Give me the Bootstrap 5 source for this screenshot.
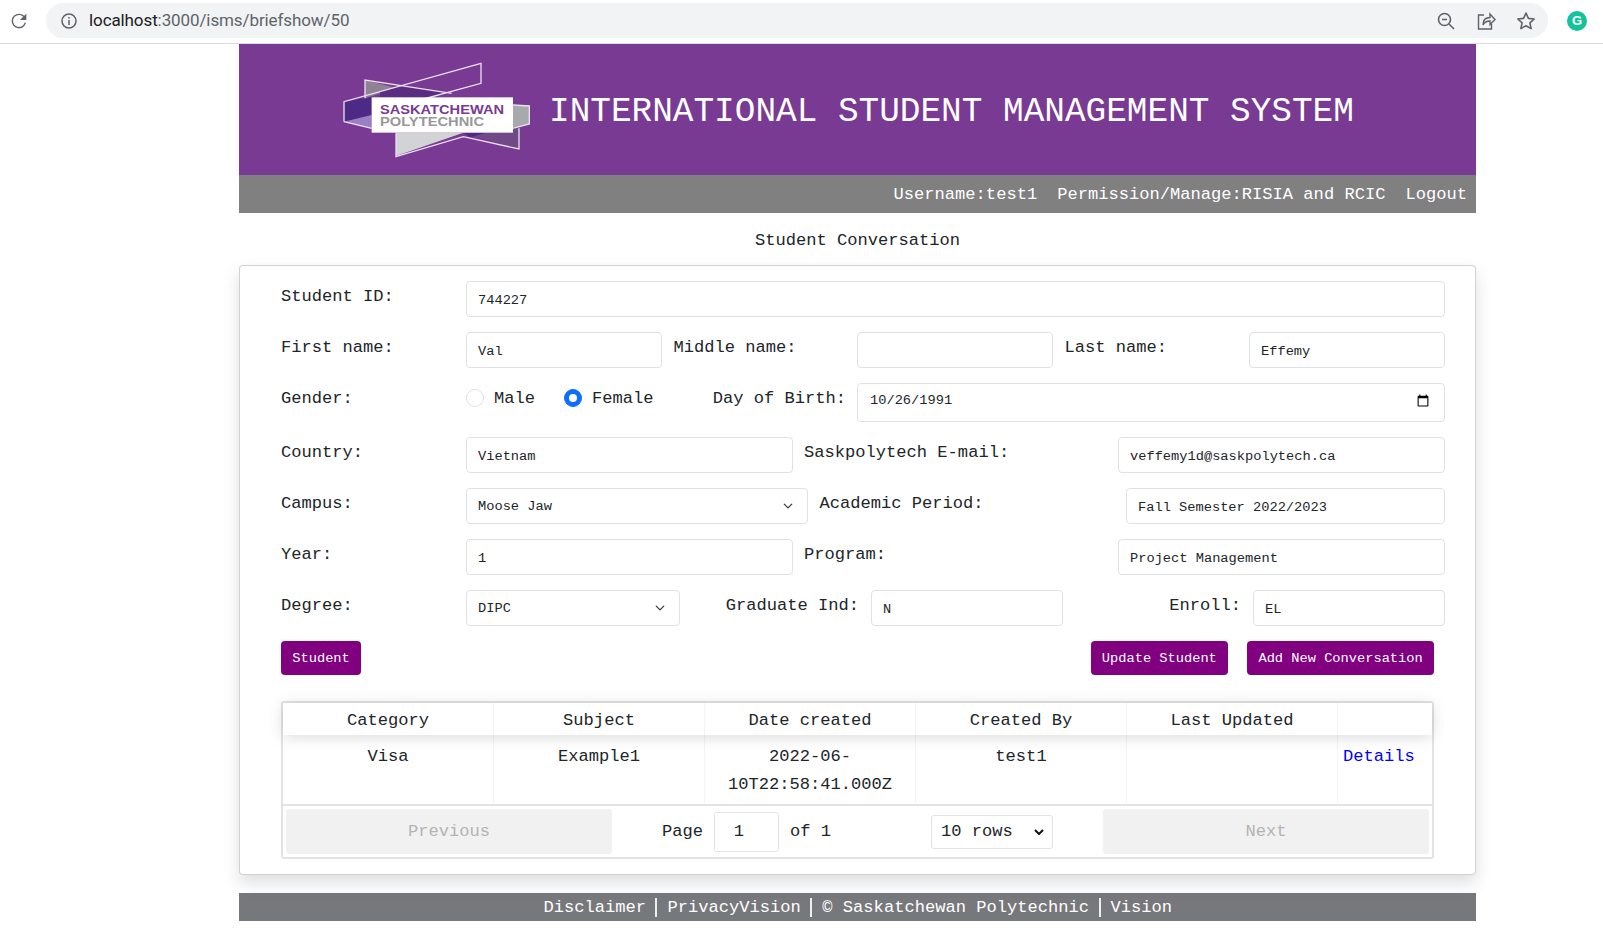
<!DOCTYPE html>
<html lang="en">
<head>
    <meta charset="UTF-8">
    <meta name="viewport" content="width=device-width, initial-scale=1.0">
    <title>ISMS</title>
    <link href="https://cdn.jsdelivr.net/npm/bootstrap@5.3.0/dist/css/bootstrap.min.css" rel="stylesheet">
    <style>
        body { font-family: "Liberation Mono", monospace; font-size: 17.1px; color: #212529; background: #fff; }

        /* browser bar */
        .chrome-bar { height: 44px; border-bottom: 1px solid #dadce0; padding: 3px 0 5px 0; }
        .chrome-reload { width: 46px; padding-right: 8px; }
        .omnibox { width: 1502px; height: 35px; background: #f1f3f4; border-radius: 18px; padding: 0 12px 0 14px; }
        .omni-url { font-family: Roboto, sans-serif; font-size: 17px; letter-spacing: -.1px; color: #5f6368; margin-left: 11px; }
        .omni-url b { font-weight: 400; color: #202124; }
        .omni-icons { gap: 20px; }
        .grammarly-dot { width: 20px; height: 20px; margin-left: 19px; background: #15c39a; color: #fff; border-radius: 50%; font: 700 13px "Liberation Sans", sans-serif; }

        .page-box { width: 1237px; margin-left: 239px; }
        .top-banner { height: 131px; background: #783a92; padding-left: 81px; color: #fff; }
        .banner-logo { display: block; width: 230px; height: 120px; }
        .banner-title { font-size: 34.4px; margin: 6px 0 0 -1px; line-height: 1; font-weight: 400; }
        .user-strip { height: 38px; background: #808080; color: #fff; padding: 2px 9px 0 0; gap: 20px; }
        .page-heading { height: 52px; line-height: 56px; text-align: center; }

        /* form card */
        .form-panel { padding: 15px 30px 15px 41px; border-radius: 4px; }
        .field-row { display: grid; margin-bottom: 15px; line-height: 28px; }
        .field-row label { padding-top: 2px; }
        .cols-wide { grid-template-columns: 185px 1fr; }
        .cols-three { grid-template-columns: 185px 196px 195px 196px 196px 196px; }
        .cols-half { grid-template-columns: 185px 326.5px 325.5px 327px; }
        .cols-campus { grid-template-columns: 185px 342px 318px 319px; }
        .cols-degree { grid-template-columns: 185px 214px 191px 192px 190px 192px; }
        .cols-gender { grid-template-columns: 185px 391px 588px; }
        .lbl-pad { padding-left: 11.5px; }
        .lbl-end { padding-right: 12px; text-align: right; }
        .form-panel .form-control, .form-panel .form-select {
            height: 36px; min-height: 0; font-size: 13.7px; padding: 2px 11px 0; border-radius: 4px; color: #212529; background-color: #fff;
        }
        .form-panel .form-select { padding-right: 30px; background-size: 12px 10px; background-position: right 13px center; }
        .form-panel input[type=date].form-control { height: 39px; padding: 0 12px 3px 12px; }
        .radio-group { height: 39px; padding-bottom: 9px; }
        .radio-group .form-check-input { width: 18px; height: 18px; margin: 0; }
        .radio-group label { margin: 0 0 0 10px; padding-top: 2px; }
        .radio-group .radio-two { margin-left: 29px; }
        .radio-group .dob-label { padding-right: 11px; margin-left: auto; }
        .purple-btn { background: #800080; border: 0; color: #fff; height: 34px; padding: 3px 11.3px 0; font-size: 13.7px; border-radius: 4px; }
        .btn-row { margin-bottom: 26px; padding-right: 11px; gap: 19px; }

        /* conversation table */
        .conv-grid { width: 1153px; border: 2px solid #e3e3e3; border-radius: 3px; }
        .conv-row > div { width: 211px; text-align: center; border-right: 1px solid #f4f4f4; padding: 0 5px; }
        .conv-row > div:last-child { width: 94px; border-right: 0; text-align: left; }
        .conv-head { height: 32px; line-height: 36px; box-shadow: 0 2px 15px rgba(0,0,0,.15); position: relative; background: #fff; }
        .conv-body { height: 71px; line-height: 28px; border-bottom: 2px solid #e3e3e3; }
        .conv-body > div { padding-top: 8px; }
        .conv-details { color: #00f; text-decoration: none; }
        .conv-pager { height: 51px; padding: 3px; }
        .pager-btn { width: 326px; height: 45px; background: #f1f1f1; color: #b4b4b4; border: 0; border-radius: 3px; }
        .pager-mid { width: 491px; gap: 100px; }
        .page-num { width: 65px; height: 40px; margin: 0 11px; border: 1px solid #e3e3e3; border-radius: 3px; text-align: center; padding: 0 15px 0 0; font: inherit; color: inherit; background: #fff; }
        .rows-pick {
            width: 122px; height: 34px; border: 1px solid #e3e3e3; border-radius: 3px; font: inherit; padding-left: 9px; color: #212529;
            appearance: none; background: #fff url("data:image/svg+xml,%3csvg xmlns='http://www.w3.org/2000/svg' viewBox='0 0 10 6'%3e%3cpath fill='none' stroke='%23111' stroke-width='2' d='M1 1l4 4 4-4'/%3e%3c/svg%3e") no-repeat right 8px center / 10px 6px;
        }

        .bottom-strip { height: 28px; margin-top: 18px; background: #77787b; color: #fff; line-height: 28px; padding-top: 1px; }
        .bottom-strip span { padding: 0 9.5px 0 10px; line-height: 19px; height: 19px; border-right: 2px solid #eee; }
        .bottom-strip span:last-child { border-right: 0; }
    </style>
</head>
<body>

<!-- browser bar -->
<div class="chrome-bar d-flex align-items-center">
    <div class="chrome-reload d-flex justify-content-center">
        <svg width="22" height="22" viewBox="0 0 24 24" fill="#5f6368"><path d="M17.65 6.35A7.95 7.95 0 0 0 12 4a8 8 0 1 0 7.73 10h-1.6A6.5 6.5 0 1 1 12 5.5c1.8 0 3.4.74 4.6 1.9L13 11h7V4z"/></svg>
    </div>
    <div class="omnibox d-flex align-items-center">
        <svg width="18" height="18" viewBox="0 0 18 18" fill="none" stroke="#5f6368" stroke-width="1.5"><circle cx="9" cy="9" r="7"/><path d="M9 8v5M9 5v1.6"/></svg>
        <div class="omni-url flex-grow-1"><b>localhost</b>:3000/isms/briefshow/50</div>
        <div class="omni-icons d-flex align-items-center">
            <svg width="20" height="20" viewBox="0 0 20 20" fill="none" stroke="#5f6368" stroke-width="1.6"><circle cx="8.5" cy="8.5" r="6"/><path d="M13 13l5 5M6 8.5h5"/></svg>
            <svg width="20" height="20" viewBox="0 0 20 20" fill="none" stroke="#5f6368" stroke-width="1.4"><path d="M8 4H2.5v14h13v-5"/><path d="M7 14c0-5 3-7.500 7-7.500V3l5 5.500-5 5V10c-3 0-5.500 1-7 4z"/></svg>
            <svg width="20" height="20" viewBox="0 0 20 20" fill="none" stroke="#5f6368" stroke-width="1.6" stroke-linejoin="round"><path d="M10 2l2.400 5.400 5.800.6-4.300 3.900 1.200 5.700-5.100-2.900-5.100 2.900 1.200-5.700L1.800 8l5.800-.6z"/></svg>
        </div>
    </div>
    <div class="grammarly-dot d-flex align-items-center justify-content-center">G</div>
</div>

<div class="page-box">
    <!-- banner -->
    <div class="top-banner d-flex align-items-center">
        <svg class="banner-logo" viewBox="0 0 690 360" role="img" aria-label="Saskatchewan Polytechnic logo">
            <polygon points="72,155 155,140 155,195 72,215" fill="#4c2a85"/>
            <polygon points="72,215 155,195 155,235" fill="#9a7fc2"/>
            <polygon points="135,90 232,115 155,138 135,145" fill="#8f8295"/>
            <polygon points="180,142 180,125 255,105 395,130 330,142" fill="#5b2d82"/>
            <polygon points="578,165 628,168 628,222 578,235" fill="#a7a9ac"/>
            <polygon points="228,248 430,248 228,318" fill="#d1d3d4"/>
            <polygon points="430,248 578,248 578,236 597,232 597,297" fill="#6f4a86"/>
            <polygon points="430,248 500,248 450,262" fill="#4c2a85"/>
            <polyline points="135,145 135,90 395,130" fill="none" stroke="#e8e0ee" stroke-width="4"/>
            <polyline points="72,215 72,155 483,40 483,100 300,150" fill="none" stroke="#e8e0ee" stroke-width="4"/>
            <polyline points="72,215 155,235" fill="none" stroke="#e8e0ee" stroke-width="4"/>
            <polyline points="228,250 228,320 430,260 597,297 597,235" fill="none" stroke="#e8e0ee" stroke-width="4"/>
            <polyline points="578,165 628,168 628,222 578,235" fill="none" stroke="#e8e0ee" stroke-width="4"/>
            <rect x="155" y="142" width="424" height="106" fill="#fff"/>
            <text x="180" y="192" font-family="Liberation Sans, sans-serif" font-weight="700" font-size="36" fill="#783a92" textLength="372" lengthAdjust="spacingAndGlyphs">SASKATCHEWAN</text>
            <text x="180" y="227" font-family="Liberation Sans, sans-serif" font-weight="700" font-size="36" fill="#97989b" textLength="312" lengthAdjust="spacingAndGlyphs">POLYTECHNIC</text>
        </svg>
        <h1 class="banner-title">INTERNATIONAL STUDENT MANAGEMENT SYSTEM</h1>
    </div>
    <div class="user-strip d-flex align-items-center justify-content-end">
        <span>Username:test1</span>
        <span>Permission/Manage:RISIA and RCIC</span>
        <span>Logout</span>
    </div>
    <div class="page-heading">Student Conversation</div>

    <div class="card shadow form-panel">
        <div class="field-row cols-wide">
            <label>Student ID:</label>
            <input class="form-control" type="text" value="744227">
        </div>
        <div class="field-row cols-three">
            <label>First name:</label>
            <input class="form-control" type="text" value="Val">
            <label class="lbl-pad">Middle name:</label>
            <input class="form-control" type="text">
            <label class="lbl-pad">Last name:</label>
            <input class="form-control" type="text" value="Effemy">
        </div>
        <div class="field-row cols-gender">
            <label>Gender:</label>
            <div class="radio-group d-flex align-items-center">
                <input class="form-check-input" type="radio" name="gender" id="gMale">
                <label for="gMale">Male</label>
                <input class="form-check-input radio-two" type="radio" name="gender" id="gFemale" checked>
                <label for="gFemale">Female</label>
                <label class="dob-label">Day of Birth:</label>
            </div>
            <input class="form-control" type="date" value="1991-10-26">
        </div>
        <div class="field-row cols-half">
            <label>Country:</label>
            <input class="form-control" type="text" value="Vietnam">
            <label class="lbl-pad">Saskpolytech E-mail:</label>
            <input class="form-control" type="text" value="veffemy1d@saskpolytech.ca">
        </div>
        <div class="field-row cols-campus">
            <label>Campus:</label>
            <select class="form-select"><option>Moose Jaw</option></select>
            <label class="lbl-pad">Academic Period:</label>
            <input class="form-control" type="text" value="Fall Semester 2022/2023">
        </div>
        <div class="field-row cols-half">
            <label>Year:</label>
            <input class="form-control" type="text" value="1">
            <label class="lbl-pad">Program:</label>
            <input class="form-control" type="text" value="Project Management">
        </div>
        <div class="field-row cols-degree">
            <label>Degree:</label>
            <select class="form-select"><option>DIPC</option></select>
            <label class="lbl-end">Graduate Ind:</label>
            <input class="form-control" type="text" value="N">
            <label class="lbl-end">Enroll:</label>
            <input class="form-control" type="text" value="EL">
        </div>
        <div class="btn-row d-flex">
            <button class="btn purple-btn me-auto" type="button">Student</button>
            <button class="btn purple-btn" type="button">Update Student</button>
            <button class="btn purple-btn" type="button">Add New Conversation</button>
        </div>

        <div class="conv-grid">
            <div class="conv-row conv-head d-flex">
                <div>Category</div><div>Subject</div><div>Date created</div><div>Created By</div><div>Last Updated</div><div></div>
            </div>
            <div class="conv-row conv-body d-flex">
                <div>Visa</div><div>Example1</div><div>2022-06-10T22:58:41.000Z</div><div>test1</div><div></div><div><a class="conv-details" href="#">Details</a></div>
            </div>
            <div class="conv-pager d-flex align-items-center">
                <button class="pager-btn" type="button" disabled>Previous</button>
                <div class="pager-mid d-flex align-items-center justify-content-center">
                    <div class="d-flex align-items-center">Page<input class="page-num" type="text" value="1">of 1</div>
                    <select class="rows-pick"><option>10 rows</option></select>
                </div>
                <button class="pager-btn" type="button" disabled>Next</button>
            </div>
        </div>
    </div>

    <div class="bottom-strip d-flex justify-content-center align-items-center">
        <span>Disclaimer</span><span>PrivacyVision</span><span>© Saskatchewan Polytechnic</span><span>Vision</span>
    </div>
</div>

<script src="https://cdn.jsdelivr.net/npm/bootstrap@5.3.0/dist/js/bootstrap.bundle.min.js"></script>
</body>
</html>
